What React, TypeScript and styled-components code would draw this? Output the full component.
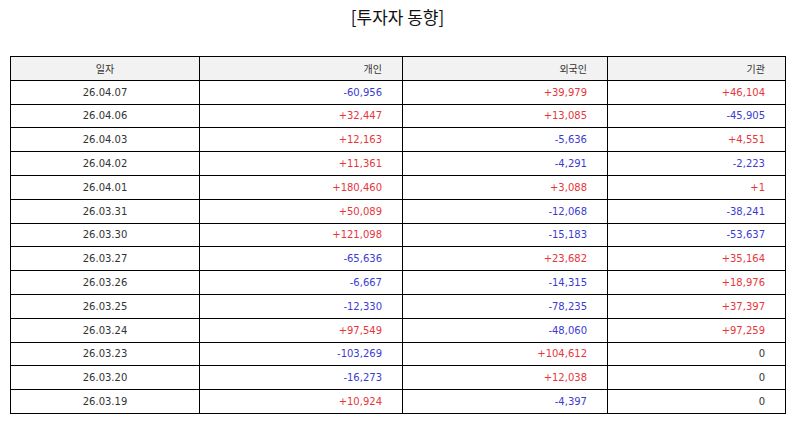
import React from "react";
import styled, { createGlobalStyle } from "styled-components";

const Global = createGlobalStyle`
  html, body { margin: 0; padding: 0; background: #fff; }
  body { font-family: "Noto Sans CJK KR", "Noto Sans", sans-serif; }
`;

const Page = styled.div`
  width: 794px;
  padding: 0 9px 0 10px;
  box-sizing: border-box;
`;

const Title = styled.h1`
  margin: 0;
  height: 56px;
  padding-top: 5px;
  box-sizing: border-box;
  text-align: center;
  font-size: 17px;
  font-weight: 400;
  color: #111;
  line-height: 24px;
`;

const Table = styled.table`
  width: 775px;
  border-collapse: collapse;
  table-layout: fixed;
  font-family: "DejaVu Sans", "Noto Sans CJK KR", sans-serif;
  font-size: 10px;
  color: #333;
`;

const Row = styled.tr`
  height: 23.8px;
`;

const HeadCell = styled.th<{ $align: string }>`
  border: 1.2px solid #000;
  background: #f2f2f2;
  font-weight: 400;
  text-align: ${(p) => p.$align};
  padding: 0 20px;
  color: #333;
`;

const Cell = styled.td<{ $align: string; $tone?: "up" | "down" | "flat" }>`
  border: 1.2px solid #000;
  text-align: ${(p) => p.$align};
  padding: 0 20px;
  color: ${(p) =>
    p.$tone === "up" ? "#e8353a" : p.$tone === "down" ? "#3b3bd2" : "#333"};
`;

const data: [string, number, number, number][] = [
  ["26.04.07", -60956, 39979, 46104],
  ["26.04.06", 32447, 13085, -45905],
  ["26.04.03", 12163, -5636, 4551],
  ["26.04.02", 11361, -4291, -2223],
  ["26.04.01", 180460, 3088, 1],
  ["26.03.31", 50089, -12068, -38241],
  ["26.03.30", 121098, -15183, -53637],
  ["26.03.27", -65636, 23682, 35164],
  ["26.03.26", -6667, -14315, 18976],
  ["26.03.25", -12330, -78235, 37397],
  ["26.03.24", 97549, -48060, 97259],
  ["26.03.23", -103269, 104612, 0],
  ["26.03.20", -16273, 12038, 0],
  ["26.03.19", 10924, -4397, 0],
];

const fmt = (n: number) =>
  n === 0 ? "0" : (n > 0 ? "+" : "-") + Math.abs(n).toLocaleString("en-US");
const tone = (n: number): "up" | "down" | "flat" =>
  n > 0 ? "up" : n < 0 ? "down" : "flat";

export default function App() {
  return (
    <Page>
      <Global />
      <Title>[투자자 동향]</Title>
      <Table>
        <colgroup>
          <col style={{ width: 189 }} />
          <col style={{ width: 203 }} />
          <col style={{ width: 205 }} />
          <col style={{ width: 178 }} />
        </colgroup>
        <thead>
          <Row>
            <HeadCell $align="center">일자</HeadCell>
            <HeadCell $align="right">개인</HeadCell>
            <HeadCell $align="right">외국인</HeadCell>
            <HeadCell $align="right">기관</HeadCell>
          </Row>
        </thead>
        <tbody>
          {data.map(([d, a, b, c]) => (
            <Row key={d}>
              <Cell $align="center">{d}</Cell>
              <Cell $align="right" $tone={tone(a)}>{fmt(a)}</Cell>
              <Cell $align="right" $tone={tone(b)}>{fmt(b)}</Cell>
              <Cell $align="right" $tone={tone(c)}>{fmt(c)}</Cell>
            </Row>
          ))}
        </tbody>
      </Table>
    </Page>
  );
}
